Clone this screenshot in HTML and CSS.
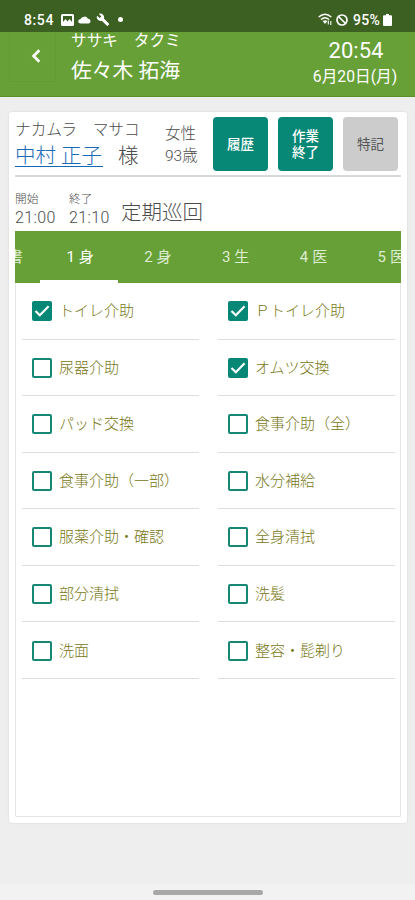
FILE: index.html
```html
<!DOCTYPE html>
<html lang="ja">
<head>
<meta charset="utf-8">
<title>定期巡回</title>
<link rel="stylesheet" href="styles.css">
</head>
<body>
<div class="status">
  <span class="clock">8:54</span>
  <svg class="pic" width="13" height="12" viewBox="0 0 13 12"><path fill="#fff" fill-rule="evenodd" d="M1.500 0h10Q13 0 13 1.500v9Q13 12 11.500 12h-10Q0 12 0 10.500v-9Q0 0 1.500 0zM2 2v6l2.500-3 2 2.500L8.500 5 11 8V2z"/></svg>
  <svg class="cloud" width="13" height="9" viewBox="0 0 13 9"><path fill="#fff" d="M2.200 8.500a2.100 2.100 0 0 1 .2-4.200A4.200 4.200 0 0 1 10 3.800a2.400 2.400 0 0 1 .8 4.700z"/></svg>
  <svg class="wrench" width="14" height="13" viewBox="0 0 24 23"><path fill="#fff" d="M22.700 19l-9.100-9.100c.9-2.300.4-5-1.500-6.900-2-2-5-2.400-7.400-1.300L9 6 6 9 1.600 4.700C.4 7.100.9 10.100 2.900 12.100c1.900 1.900 4.600 2.400 6.900 1.500l9.100 9.100c.4.400 1 .4 1.400 0l2.300-2.300c.5-.4.5-1.100.1-1.400z"/></svg>
  <i class="dot"></i>
  <span class="grow"></span>
  <svg class="wifi" width="15" height="13" viewBox="0 0 15 13"><path fill="none" stroke="#fff" stroke-width="1.500" d="M.7 4Q7 -1.500 13.300 4M3 6.500Q7 3 11 6.500"/><path fill="#fff" d="M4.700 8Q7 6.300 9.300 8L7 11z"/><path stroke="#fff" stroke-width="1.100" d="M10.300 7.500v4M12.800 8v4"/></svg>
  <svg class="block" width="12" height="12" viewBox="0 0 12 12"><g fill="none" stroke="#fff" stroke-width="1.700"><circle cx="6" cy="6" r="5"/><path d="M2.500 2.500l7 7"/></g></svg>
  <span class="pct">95%</span>
  <svg class="batt" width="9" height="12" viewBox="0 0 9 12"><path fill="#fff" d="M3 0h3v1.200h2q1 0 1 1V11q0 1-1 1H1q-1 0-1-1V2.200q0-1 1-1h2z"/></svg>
</div>
<header class="head">
  <div class="back"><svg width="10" height="16" viewBox="0 0 10 16"><path d="M8.300 2.300L2.600 8l5.700 5.700" fill="none" stroke="#fff" stroke-width="2.700"/></svg></div>
  <div class="staff"><div class="kana">ササキ　タクミ</div><div class="name">佐々木 拓海</div></div>
  <div class="now"><div class="time">20:54</div><div class="date">6月20日(月)</div></div>
</header>
<main class="card">
  <section class="client">
    <div class="who"><div class="ckana">ナカムラ　マサコ</div><div class="cname"><a>中村 正子</a><span>様</span></div></div>
    <div class="attrs"><div>女性</div><div>93歳</div></div>
    <div class="btns"><div class="btn">履歴</div><div class="btn">作業<br>終了</div><div class="btn gray">特記</div></div>
  </section>
  <section class="visit">
    <div class="slot"><div class="cap">開始</div><div class="val">21:00</div></div>
    <div class="slot"><div class="cap">終了</div><div class="val">21:10</div></div>
    <div class="kind">定期巡回</div>
  </section>
  <nav class="tabs">
    <div class="tab prev">書</div><div class="tab on">1 身</div><div class="tab">2 身</div><div class="tab">3 生</div><div class="tab">4 医</div><div class="tab">5 医</div>
  </nav>
  <section class="list">
    <div class="item"><i class="box ck"><svg viewBox="0 0 20 20"><path d="M3.500 10l4.300 4.300 8.800-9"/></svg></i>トイレ介助</div>
    <div class="item"><i class="box ck"><svg viewBox="0 0 20 20"><path d="M3.500 10l4.300 4.300 8.800-9"/></svg></i>Ｐトイレ介助</div>
    <div class="item"><i class="box"></i>尿器介助</div>
    <div class="item"><i class="box ck"><svg viewBox="0 0 20 20"><path d="M3.500 10l4.300 4.300 8.800-9"/></svg></i>オムツ交換</div>
    <div class="item"><i class="box"></i>パッド交換</div>
    <div class="item"><i class="box"></i>食事介助（全）</div>
    <div class="item"><i class="box"></i>食事介助（一部）</div>
    <div class="item"><i class="box"></i>水分補給</div>
    <div class="item"><i class="box"></i>服薬介助・確認</div>
    <div class="item"><i class="box"></i>全身清拭</div>
    <div class="item"><i class="box"></i>部分清拭</div>
    <div class="item"><i class="box"></i>洗髪</div>
    <div class="item"><i class="box"></i>洗面</div>
    <div class="item"><i class="box"></i>整容・髭剃り</div>
  </section>
</main>
<footer class="nav"><i></i></footer>
</body>
</html>
```
FILE: styles.css
```css
* { box-sizing: border-box; }
body {
  margin: 0;
  height: 900px;
  overflow: hidden;
  display: flex;
  flex-direction: column;
  background: #eee;
  font-family: Roboto, "Noto Sans CJK JP", sans-serif;
  font-weight: 300;
  color: #4c4c4c;
  white-space: nowrap;
}
svg { display: block; flex: none; }
.status {
  flex: none;
  height: 32px;
  padding: 7px 23px 0 24px;
  display: flex;
  align-items: center;
  background: #3c6022;
  color: #fff;
  font-weight: 500;
  font-size: 14px;
  line-height: 24px;
}
.clock { width: 37px; letter-spacing: .6px; }
.cloud { margin-left: 4px; }
.wrench { margin-left: 5px; }
.dot { width: 5px; height: 5px; border-radius: 50%; background: #fff; margin-left: 8px; }
.grow { flex: 1; }
.block { margin-left: 3px; }
.pct { width: 30px; margin-left: 5px; letter-spacing: .3px; }
.head {
  flex: none;
  height: 65px;
  display: flex;
  background: #68a038;
  border-bottom: 1px solid #5b9227;
  color: #fff;
  font-weight: 400;
}
.back {
  width: 47px;
  height: 50px;
  margin-left: 9px;
  padding: 0 0 2px 7px;
  display: flex;
  align-items: center;
  justify-content: center;
  border: 1px solid #629a34;
  border-top: 0;
}
.back svg { margin-right: 1px; }
.staff { flex: 1; margin-left: 15px; overflow: hidden; }
.kana { margin-top: -2px; font-size: 15.700px; line-height: 22px; }
.name { margin-top: 4px; font-size: 20.800px; line-height: 30px; }
.now { width: 90px; margin-right: 15px; text-align: center; }
.time { margin-top: 6px; padding-left: 2px; font-size: 22px; line-height: 26px; }
.date { margin-top: 1px; font-size: 15.700px; line-height: 24px; }
.card {
  flex: none;
  width: 398px;
  height: 711px;
  margin: 15px 0 0 9px;
  padding: 0 6px;
  background: #fff;
  border-radius: 3px;
  box-shadow: 0 0 2px #ccc;
}
.client { height: 65px; display: flex; border-bottom: 2px solid #d8d8d8; }
.who { width: 150px; }
.ckana { margin-top: 7px; font-size: 15.700px; line-height: 22px; }
.cname { font-size: 20.500px; line-height: 30px; display: flex; }
.cname a { width: 88px; height: 26px; border-bottom: 1px solid #1669b5; color: #1669b5; }
.cname span { margin-left: 15px; }
.attrs { width: 48px; padding-top: 11px; font-size: 15.500px; line-height: 22px; }
.btns { display: flex; gap: 10px; padding-top: 5px; }
.btn {
  width: 55px;
  height: 54px;
  border-radius: 4px;
  background: #078775;
  color: #fff;
  display: flex;
  align-items: center;
  justify-content: center;
  font-size: 13.500px;
  line-height: 16px;
  font-weight: 500;
}
.gray { background: #ccc; color: #555; font-weight: 400; }
.visit { height: 54px; display: flex; }
.slot { width: 54px; padding-top: 13px; }
.cap { font-size: 11.700px; line-height: 18px; }
.val { font-size: 16px; line-height: 19px; letter-spacing: .4px; }
.kind { margin: 21px 0 0 -2px; font-size: 20.500px; line-height: 30px; }
.tabs {
  width: 386px;
  height: 52px;
  display: flex;
  overflow: hidden;
  background: #68a038;
  color: #ddedd0;
  font-weight: 400;
  font-size: 15px;
  line-height: 53px;
  letter-spacing: .6px;
  word-spacing: -1px;
}
.tab { flex: none; width: 77.800px; padding-left: 3px; text-align: center; }
.tab.prev { width: 25px; padding: 0; text-align: left; text-indent: -7px; }
.on { color: #fff; border-bottom: 3px solid #fff; }
.list {
  width: 386px;
  height: 534px;
  padding: 0 6px;
  display: grid;
  grid-template-columns: 177px 177px;
  grid-auto-rows: 56.550px;
  column-gap: 19px;
  align-content: start;
  border: 1px solid #e6e6e6;
  border-top: 0;
  border-radius: 0 0 2px 2px;
}
.item {
  display: flex;
  align-items: center;
  padding: 1px 0 0 9.500px;
  border-bottom: 1px solid #ddd;
  color: #787716;
  font-size: 15px;
  line-height: 22px;
}
.box {
  flex: none;
  width: 20px;
  height: 20px;
  margin-right: 7.500px;
  border: 2px solid #178775;
  border-radius: 2px;
}
.ck { background: #078775; border: 0; }
.ck path { fill: none; stroke: #fff; stroke-width: 2.200; }
.nav {
  flex: none;
  height: 16px;
  margin-top: auto;
  display: flex;
  justify-content: center;
  background: #f2f2f2;
}
.nav i { width: 110px; height: 5px; margin-top: 6px; border-radius: 3px; background: #a8a8a8; }
```
